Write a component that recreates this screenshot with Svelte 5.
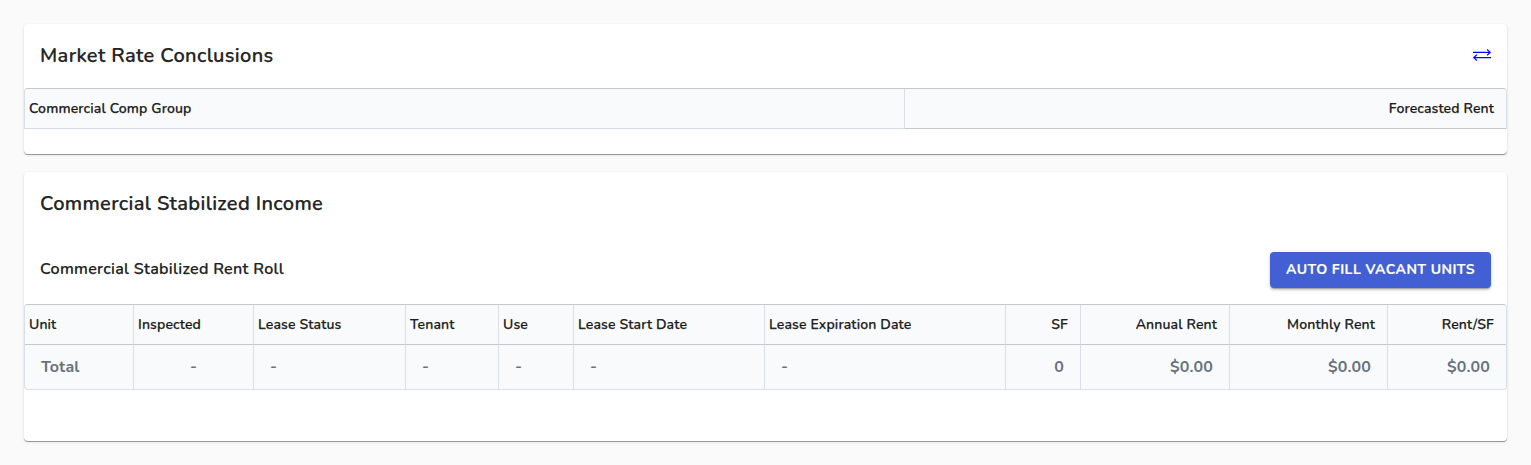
<script>
  const columns = [
    { label: 'Unit', total: 'Total', align: 'left' },
    { label: 'Inspected', total: '-', align: 'left', totalAlign: 'center' },
    { label: 'Lease Status', total: '-', align: 'left' },
    { label: 'Tenant', total: '-', align: 'left' },
    { label: 'Use', total: '-', align: 'left' },
    { label: 'Lease Start Date', total: '-', align: 'left' },
    { label: 'Lease Expiration Date', total: '-', align: 'left' },
    { label: 'SF', total: '0', align: 'right' },
    { label: 'Annual Rent', total: '$0.00', align: 'right' },
    { label: 'Monthly Rent', total: '$0.00', align: 'right' },
    { label: 'Rent/SF', total: '$0.00', align: 'right' }
  ];
</script>

<main>
  <section class="card rates">
    <header>
      <h2>Market Rate Conclusions</h2>
      <button class="swap" aria-label="Swap">
        <svg width="18" height="14" viewBox="0 0 18 14" fill="none" stroke="#0000ff">
          <path d="M0 4.4H17M0.7 9.6H18" stroke-width="1.2" />
          <path d="M14.1 1.4L17.1 4.4L14.1 7.4M3.9 6.6L.9 9.6L3.9 12.6" stroke-width="1.3" />
        </svg>
      </button>
    </header>
    <div class="table two">
      <div class="th">Commercial Comp Group</div>
      <div class="th right">Forecasted Rent</div>
    </div>
  </section>

  <section class="card income">
    <header>
      <h2>Commercial Stabilized Income</h2>
    </header>
    <div class="toolbar">
      <h3>Commercial Stabilized Rent Roll</h3>
      <button class="fill">AUTO FILL VACANT UNITS</button>
    </div>
    <div class="table roll">
      {#each columns as c}
        <div class="th {c.align}">{c.label}</div>
      {/each}
      {#each columns as c}
        <div class="td {c.totalAlign ?? c.align}">{c.total}</div>
      {/each}
    </div>
  </section>
</main>

<style>
  :global(body) {
    background: #fafafa;
  }
  main {
    box-sizing: border-box;
    height: 465px;
    padding: 24px;
    display: flex;
    flex-direction: column;
    gap: 18px;
    font-family: Nunito, Lato, sans-serif;
    color: rgba(0, 0, 0, 0.87);
  }
  .card {
    background: #fff;
    border-radius: 4px;
    box-shadow: 0 1px 0 -0.1px #999, 0 1px 3px rgba(0, 0, 0, 0.14);
  }
  .rates {
    height: 130px;
  }
  .income {
    height: 269px;
  }
  header {
    height: 64px;
    box-sizing: border-box;
    padding: 0 16px;
    display: flex;
    align-items: center;
    justify-content: space-between;
  }
  h2,
  h3 {
    margin: 0;
    font-weight: 600;
    -webkit-text-stroke: 0.25px currentColor;
  }
  h2 {
    font-size: 20px;
    line-height: 32px;
    letter-spacing: 0.34px;
  }
  h3 {
    padding-bottom: 2px;
    font-size: 16px;
    line-height: 28px;
    letter-spacing: 0.3px;
  }
  button {
    border: 0;
    font-family: inherit;
  }
  .swap {
    padding: 0 0 2px;
    background: none;
    display: flex;
  }
  .toolbar {
    height: 68px;
    box-sizing: border-box;
    padding: 0 16px;
    display: flex;
    align-items: center;
    justify-content: space-between;
  }
  .fill {
    height: 36px;
    padding: 0 16px 2px;
    border-radius: 4px;
    background: #425fd3;
    color: #fff;
    font-size: 14px;
    font-weight: 700;
    letter-spacing: 0.46px;
    -webkit-text-stroke: 0.15px currentColor;
    box-shadow: 0 3px 1px -2px rgba(0, 0, 0, 0.2), 0 2px 2px rgba(0, 0, 0, 0.14), 0 1px 5px rgba(0, 0, 0, 0.12);
  }
  .table {
    display: grid;
    box-sizing: border-box;
    background: #f9fafc;
    border: 1px solid #d8deea;
    border-top-color: #c8c8cb;
    border-radius: 4px;
    overflow: hidden;
  }
  .two {
    height: 41px;
    grid-template-columns: 880px 1fr;
    grid-template-rows: 40px;
    border-bottom: 0;
    border-radius: 4px 4px 0 0;
  }
  .two .th {
    border-bottom-color: #d3dcea;
  }
  .two .th.right {
    border-bottom-color: #c8c8cb;
  }
  .roll {
    grid-template-columns: 109px 120px 152px 93px 75px 191px 241px 75px 149px 158px 118px;
    grid-template-rows: 40px 44px;
  }
  .th,
  .td {
    box-sizing: border-box;
    display: flex;
    align-items: center;
    border-right: 1px solid #dcdee2;
    white-space: nowrap;
  }
  .th {
    padding: 0 12px 0 4px;
    border-bottom: 1px solid #c8c8cb;
    font-size: 14px;
    font-weight: 600;
    letter-spacing: 0.13px;
    -webkit-text-stroke: 0.25px currentColor;
  }
  .td {
    padding: 0 16px;
    border-right-color: #d8deea;
    color: #66727f;
    font-size: 16px;
    font-weight: 700;
    letter-spacing: 0.15px;
  }
  .right {
    justify-content: flex-end;
  }
  .center {
    justify-content: center;
  }
  .two .th:last-child,
  .roll .th:nth-child(11),
  .roll .td:last-child {
    border-right: 0;
  }
</style>
